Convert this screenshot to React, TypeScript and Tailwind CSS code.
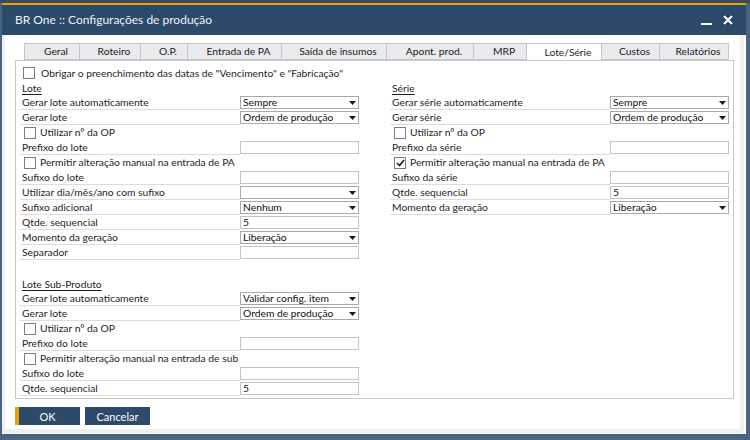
type RowProps = { label: string; value?: string; select?: boolean };

const tabs = [
  { name: "Geral", w: "w-[56px]" },
  { name: "Roteiro", w: "w-[61px]" },
  { name: "O.P.", w: "w-[47px]" },
  { name: "Entrada de PA", w: "w-[94px]" },
  { name: "Saída de insumos", w: "w-[105px]" },
  { name: "Apont. prod.", w: "w-[87px]" },
  { name: "MRP", w: "w-[53px]" },
  { name: "Lote/Série", w: "w-[75px]", active: true },
  { name: "Custos", w: "w-[58px]" },
  { name: "Relatórios", w: "w-[69px]" },
];

function Arrow() {
  return (
    <svg width="7" height="4" viewBox="0 0 7 4" className="mr-[1px] shrink-0">
      <path d="M0 0 L7 0 L3.5 4 Z" fill="#1a1a1a" />
    </svg>
  );
}

function Row({ label, value, select }: RowProps) {
  return (
    <div className="flex h-[15px]">
      <div className="flex flex-1 items-center border-b border-[#dcdcdc] pl-[2px] leading-none">{label}</div>
      <div
        className={`my-[1px] flex w-[119px] items-center justify-between border pl-[2px] pr-[1px] leading-none bg-white ${
          select ? "border-[#a9a9a9]" : "border-[#c4c4c4]"
        }`}
      >
        <span className="text-[#111]">{value}</span>
        {select && <Arrow />}
      </div>
    </div>
  );
}

function Check({ label, checked }: { label: string; checked?: boolean }) {
  return (
    <div className="flex h-[15px] items-center gap-[4px] pl-[4px] leading-none">
      <div className="flex h-[12px] w-[12px] items-center justify-center border border-[#7d7d7d] bg-white">
        {checked && (
          <svg width="9" height="8" viewBox="0 0 9 8">
            <path d="M1 4 L3.5 6.5 L8 1" stroke="#1a1a1a" strokeWidth="1.6" fill="none" />
          </svg>
        )}
      </div>
      <span>{label}</span>
    </div>
  );
}

function Header({ label }: { label: string }) {
  return <div className="flex h-[14px] items-center pl-[2px] leading-none underline underline-offset-[2px]">{label}</div>;
}

export default function App() {
  return (
    <div className="flex h-[440px] w-[750px] flex-col bg-[#476582] [font-family:Lato,sans-serif] text-[10.3px] text-[#1e1e1e]">
      <div className="h-[3px] bg-[#3c4a59]" />
      <div className="flex flex-1 flex-col pl-[2px] pr-[4px] pb-[6px]">
        <div className="h-[2px] bg-[#e8a20c]" />
        <div className="flex h-[30px] items-center justify-between bg-[#2c4a69] pl-[13px] pr-[13px]">
          <span className="text-[12px] text-[#eef2f6]">BR One :: Configurações de produção</span>
          <div className="flex items-center gap-[11px]">
            <div className="mt-[8px] h-[2px] w-[11px] bg-white" />
            <svg width="10" height="10" viewBox="0 0 10 10">
              <path d="M1 1 L9 9 M9 1 L1 9" stroke="white" strokeWidth="2" />
            </svg>
          </div>
        </div>
        <div className="flex flex-1 flex-col bg-white pr-[2px] pb-[1px]">
          <div className="flex flex-1 flex-col border-b-[4px] border-l-[3px] border-r-[4px] border-[#efefef] bg-white pl-[10px] pr-[6px] pt-[8px]">
            <div className="flex pl-[9px]">
              {tabs.map((t, i) => (
                <div
                  key={t.name}
                  className={`flex h-[17px] items-center justify-center border-t border-[#c6c6c6] pl-[8px] leading-none ${t.w} ${
                    i === 0 ? "border-l" : ""
                  } border-r ${t.active ? "-mb-[1px] h-[17px] bg-white" : "border-b bg-[#e8eaed] text-[#222]"}`}
                >
                  {t.name}
                </div>
              ))}
            </div>
            <div className="flex h-[339px] flex-col border border-[#c8c8c8] bg-white px-[4px] pt-[4px]">
              <div className="flex h-[16px] items-center gap-[6px] pl-[3px] leading-none">
                <div className="h-[12px] w-[12px] border border-[#7d7d7d] bg-white" />
                <span>Obrigar o preenchimento das datas de "Vencimento" e "Fabricação"</span>
              </div>
              <div className="flex gap-[31px]">
                <div className="flex w-[339px] flex-col">
                  <Header label="Lote" />
                  <Row label="Gerar lote automaticamente" value="Sempre" select />
                  <Row label="Gerar lote" value="Ordem de produção" select />
                  <Check label="Utilizar nº da OP" />
                  <Row label="Prefixo do lote" />
                  <Check label="Permitir alteração manual na entrada de PA" />
                  <Row label="Sufixo do lote" />
                  <Row label="Utilizar dia/mês/ano com sufixo" select />
                  <Row label="Sufixo adicional" value="Nenhum" select />
                  <Row label="Qtde. sequencial" value="5" />
                  <Row label="Momento da geração" value="Liberação" select />
                  <Row label="Separador" />
                  <div className="h-[17px]" />
                  <Header label="Lote Sub-Produto" />
                  <Row label="Gerar lote automaticamente" value="Validar config. item" select />
                  <Row label="Gerar lote" value="Ordem de produção" select />
                  <Check label="Utilizar nº da OP" />
                  <Row label="Prefixo do lote" />
                  <Check label="Permitir alteração manual na entrada de sub" />
                  <Row label="Sufixo do lote" />
                  <Row label="Qtde. sequencial" value="5" />
                </div>
                <div className="flex w-[339px] flex-col">
                  <Header label="Série" />
                  <Row label="Gerar série automaticamente" value="Sempre" select />
                  <Row label="Gerar série" value="Ordem de produção" select />
                  <Check label="Utilizar nº da OP" />
                  <Row label="Prefixo da série" />
                  <Check label="Permitir alteração manual na entrada de PA" checked />
                  <Row label="Sufixo da série" />
                  <Row label="Qtde. sequencial" value="5" />
                  <Row label="Momento da geração" value="Liberação" select />
                </div>
              </div>
            </div>
            <div className="mt-[8px] flex gap-[5px]">
              <div className="flex h-[18px] w-[65px] bg-[#2c4a69] text-[11px] text-white">
                <div className="w-[4px] bg-[#e5a00d]" />
                <div className="flex flex-1 items-center justify-center pr-[4px] leading-none">OK</div>
              </div>
              <div className="flex h-[18px] w-[65px] items-center justify-center bg-[#2c4a69] text-[11px] leading-none text-white">
                Cancelar
              </div>
            </div>
          </div>
        </div>
      </div>
    </div>
  );
}
